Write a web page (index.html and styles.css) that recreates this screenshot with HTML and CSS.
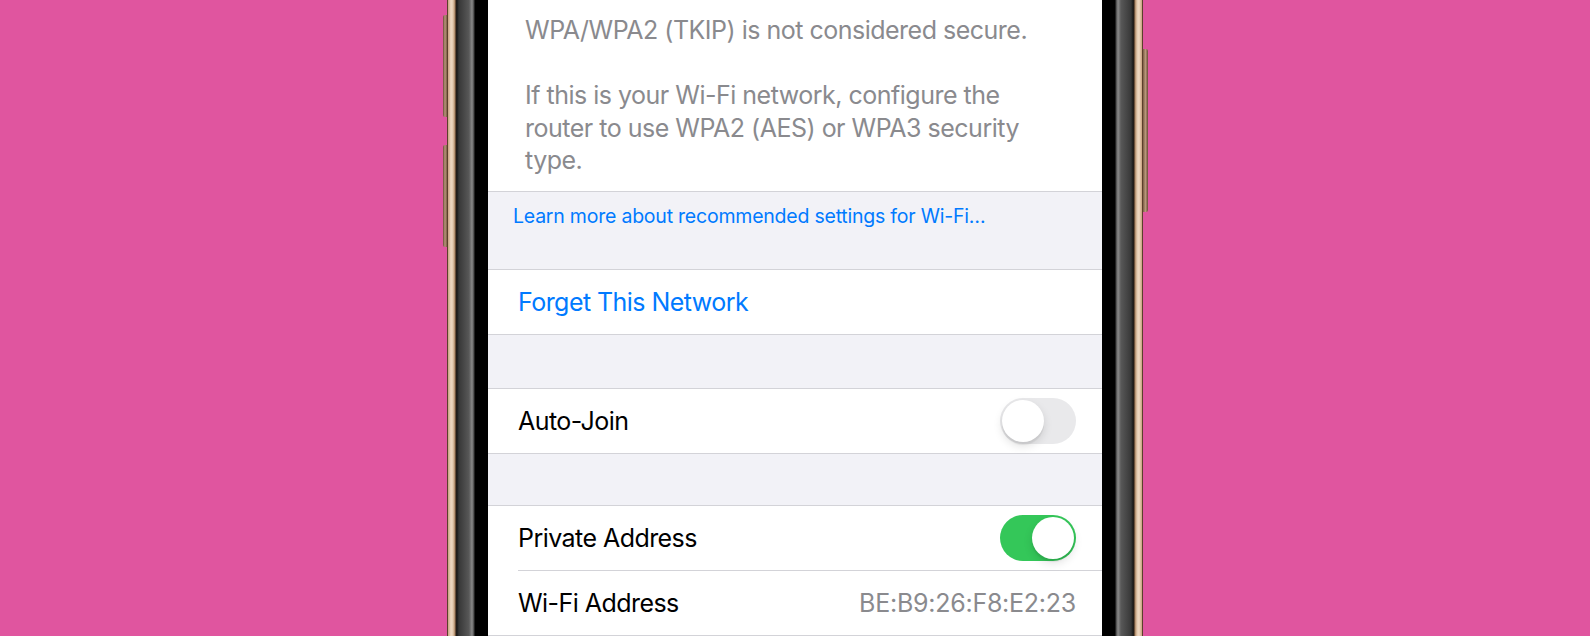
FILE: index.html
```html
<!DOCTYPE html>
<html lang="en">
  <head>
    <meta charset="UTF-8" />
    <meta name="viewport" content="width=device-width, initial-scale=1.0" />
    <title>Wi-Fi</title>
    <link rel="stylesheet" href="styles.css">
  </head>
  <body>
    <div class="phone">
      <div class="side-button volume-up"></div>
      <div class="side-button volume-down"></div>
      <div class="side-button power"></div>

      <div class="frame frame-left"></div>

      <div class="screen">
        <div class="group description">
          <p>WPA/WPA2 (TKIP) is not considered secure.</p>
          <p>If this is your Wi-Fi network, configure the<br />router to use WPA2 (AES) or WPA3 security<br />type.</p>
        </div>
        <div class="footer">
          <a href="#">Learn more about recommended settings for Wi-Fi…</a>
        </div>

        <div class="group">
          <div class="row">
            <span class="label link">Forget This Network</span>
          </div>
        </div>

        <div class="spacer"></div>

        <div class="group">
          <div class="row">
            <span class="label">Auto-Join</span>
            <div class="toggle"></div>
          </div>
        </div>

        <div class="spacer short"></div>

        <div class="group">
          <div class="row">
            <span class="label">Private Address</span>
            <div class="toggle on"></div>
          </div>
          <div class="row">
            <span class="label">Wi-Fi Address</span>
            <span class="value">BE:B9:26:F8:E2:23</span>
          </div>
        </div>
      </div>

      <div class="frame frame-right"></div>
    </div>
  </body>
</html>
```

FILE: styles.css
```css
body {
  margin: 0;
  height: 636px;
  overflow: hidden;
  background-color: #e0559f;
  display: flex;
  justify-content: center;
  font-family: "Inter", "Liberation Sans", sans-serif;
}
.phone {
  position: relative;
  display: flex;
  width: 696px;
  height: 636px;
}

/* 本体のふち (金 → グレー → 黒) */
.frame {
  width: 41px;
  flex-shrink: 0;
}
.frame-left {
  background: linear-gradient(
    to right,
    #5b3f2b 0,
    #5b3f2b 1px,
    #c9a27f 1px,
    #efd9c3 4px,
    #e3c9ae 6px,
    #a9825f 8px,
    #2a1d14 9px,
    #1a1a1a 10px,
    #383838 12px,
    #585858 22px,
    #8a8a8a 25px,
    #444 27px,
    #000 28px,
    #000 41px
  );
}
.frame-right {
  background: linear-gradient(
    to left,
    #5b3f2b 0,
    #5b3f2b 1px,
    #c9a27f 1px,
    #efd9c3 4px,
    #e3c9ae 6px,
    #a9825f 8px,
    #2a1d14 9px,
    #1a1a1a 10px,
    #383838 12px,
    #585858 22px,
    #8a8a8a 25px,
    #444 27px,
    #000 28px,
    #000 41px
  );
}
.side-button {
  position: absolute;
  width: 4px;
  background: linear-gradient(to right, #6b4c36, #b8967a 50%, #7d5c44);
}
.volume-up {
  left: -4px;
  top: 15px;
  height: 102px;
  border-radius: 2px 0 0 2px;
}
.volume-down {
  left: -4px;
  top: 145px;
  height: 102px;
  border-radius: 2px 0 0 2px;
}
.power {
  right: -5px;
  width: 5px;
  top: 49px;
  height: 163px;
  border-radius: 0 2px 2px 0;
  background: linear-gradient(to left, #6b4c36, #b8967a 50%, #7d5c44);
}

/* 画面 */
.screen {
  flex: 1;
  background-color: #f2f2f7;
  overflow: hidden;
}
.group {
  background-color: #fff;
  border-top: 1px solid #d3d3d8;
  border-bottom: 1px solid #d3d3d8;
}
.description {
  border-top: none;
  padding: 14px 30px 14px 37px;
  color: #8a8a8e;
  font-size: 25px;
  line-height: 32.5px;
  letter-spacing: -0.5px;
}
.description p {
  margin: 0;
}
.description p + p {
  margin-top: 32.5px;
}
.footer {
  height: 77px;
  box-sizing: border-box;
  padding: 12px 24px 0 25px;
  font-size: 19.5px;
  line-height: 24px;
  letter-spacing: -0.22px;
}
.footer a {
  color: #007aff;
  text-decoration: none;
}
.spacer {
  height: 53px;
}
.spacer.short {
  height: 51px;
}
.row {
  height: 64px;
  display: flex;
  align-items: center;
  justify-content: space-between;
  padding: 0 26px 0 30px;
}
.row + .row {
  border-top: 1px solid #d3d3d8;
  margin-left: 30px;
  padding-left: 0;
}
.label {
  font-size: 25px;
  color: #000;
  letter-spacing: -0.55px;
}
.link {
  color: #007aff;
}
.value {
  font-size: 25px;
  color: #8a8a8e;
  letter-spacing: -0.25px;
}

/* スイッチ */
.toggle {
  width: 76px;
  height: 46px;
  box-sizing: border-box;
  padding: 2px;
  border-radius: 23px;
  background-color: #e9e9eb;
  display: flex;
  align-items: center;
}
.toggle::after {
  content: "";
  width: 42px;
  height: 42px;
  border-radius: 50%;
  background-color: #fff;
  box-shadow: 0 4px 10px rgba(0, 0, 0, 0.12), 0 3px 1px rgba(0, 0, 0, 0.06);
}
.toggle.on {
  background-color: #34c759;
  justify-content: flex-end;
}
```
